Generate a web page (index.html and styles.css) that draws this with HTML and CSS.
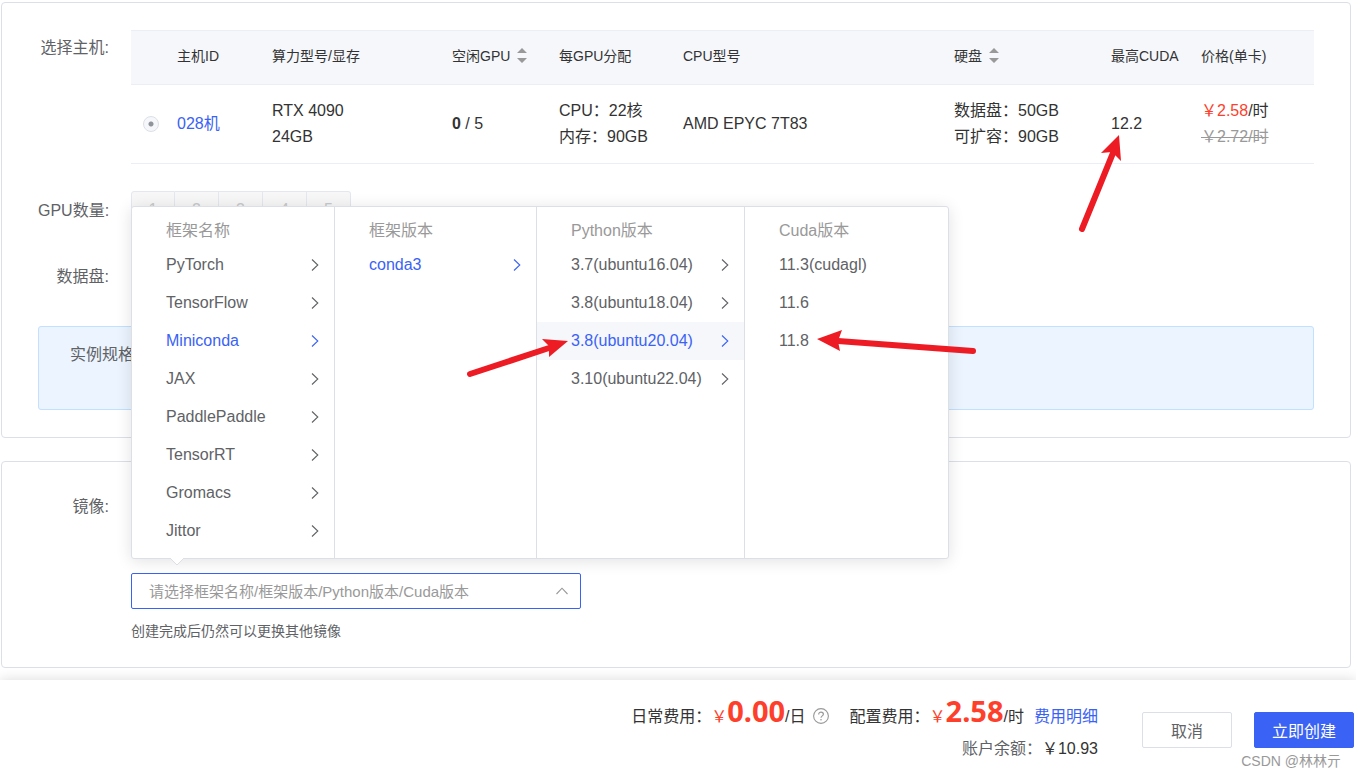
FILE: index.html
```html
<!DOCTYPE html>
<html lang="zh-CN">
<head>
<meta charset="utf-8">
<title>创建实例</title>
<link rel="stylesheet" href="styles.css">
</head>
<body>
<svg class="defs" width="0" height="0" aria-hidden="true">
  <symbol id="chevron" viewBox="0 0 8 14"><path d="M1 1.5 6.8 7 1 12.5" fill="none" stroke="currentColor" stroke-width="1.1"/></symbol>
  <symbol id="sort" viewBox="0 0 10 15"><path d="M5 0 10 5H0zM0 10H10L5 15z" fill="currentColor"/></symbol>
</svg>
<main class="main">
  <section class="card">
    <div class="form-row form-row--host">
      <span class="label label--top">选择主机:</span>
      <table class="hosts">
        <colgroup>
          <col class="c-radio"><col class="c-id"><col class="c-model"><col class="c-free"><col class="c-alloc"><col class="c-cpu"><col class="c-disk"><col class="c-cuda"><col class="c-price">
        </colgroup>
        <thead>
          <tr>
            <th></th>
            <th>主机ID</th>
            <th>算力型号/显存</th>
            <th><span class="sortable">空闲GPU<svg class="sort-icon"><use href="#sort"/></svg></span></th>
            <th>每GPU分配</th>
            <th>CPU型号</th>
            <th><span class="sortable">硬盘<svg class="sort-icon"><use href="#sort"/></svg></span></th>
            <th>最高CUDA</th>
            <th>价格(单卡)</th>
          </tr>
        </thead>
        <tbody>
          <tr>
            <td><input class="radio" type="radio" name="host" aria-label="028机" checked disabled></td>
            <td><a class="link" href="#">028机</a></td>
            <td>RTX 4090<br>24GB</td>
            <td><b>0</b> / 5</td>
            <td>CPU：22核<br>内存：90GB</td>
            <td>AMD EPYC 7T83</td>
            <td>数据盘：50GB<br>可扩容：90GB</td>
            <td>12.2</td>
            <td><span class="price">￥2.58</span>/时<br><del class="old-price">￥2.72/时</del></td>
          </tr>
        </tbody>
      </table>
    </div>
    <div class="form-row form-row--gpu">
      <span class="label">GPU数量:</span>
      <div class="gpu-group">
        <button type="button" disabled>1</button><button type="button" disabled>2</button><button type="button" disabled>3</button><button type="button" disabled>4</button><button type="button" disabled>5</button>
      </div>
    </div>
    <div class="form-row form-row--disk">
      <span class="label">数据盘:</span>
    </div>
    <div class="spec">实例规格:</div>
  </section>

  <section class="card card--image">
    <div class="form-row">
      <label class="label label--top" for="image">镜像:</label>
      <div class="image-field">
        <div class="cascader">
          <input class="cascader-input" id="image" type="text" placeholder="请选择框架名称/框架版本/Python版本/Cuda版本" readonly>
          <svg class="cascader-caret" viewBox="0 0 14 8"><path d="M1.5 7 7 1.2 12.5 7" fill="none" stroke="currentColor" stroke-width="1.1"/></svg>
          <div class="popper">
            <div class="menu">
              <h4>框架名称</h4>
              <ul>
                <li>PyTorch<svg><use href="#chevron"/></svg></li>
                <li>TensorFlow<svg><use href="#chevron"/></svg></li>
                <li class="active">Miniconda<svg><use href="#chevron"/></svg></li>
                <li>JAX<svg><use href="#chevron"/></svg></li>
                <li>PaddlePaddle<svg><use href="#chevron"/></svg></li>
                <li>TensorRT<svg><use href="#chevron"/></svg></li>
                <li>Gromacs<svg><use href="#chevron"/></svg></li>
                <li>Jittor<svg><use href="#chevron"/></svg></li>
              </ul>
            </div>
            <div class="menu">
              <h4>框架版本</h4>
              <ul>
                <li class="active">conda3<svg><use href="#chevron"/></svg></li>
              </ul>
            </div>
            <div class="menu menu--python">
              <h4>Python版本</h4>
              <ul>
                <li>3.7(ubuntu16.04)<svg><use href="#chevron"/></svg></li>
                <li>3.8(ubuntu18.04)<svg><use href="#chevron"/></svg></li>
                <li class="active hover">3.8(ubuntu20.04)<svg><use href="#chevron"/></svg></li>
                <li>3.10(ubuntu22.04)<svg><use href="#chevron"/></svg></li>
              </ul>
            </div>
            <div class="menu menu--cuda">
              <h4>Cuda版本</h4>
              <ul>
                <li>11.3(cudagl)</li>
                <li>11.6</li>
                <li>11.8</li>
              </ul>
            </div>
            <svg class="popper-arrow" viewBox="0 0 14 8"><path d="M0 0 7 7 14 0" fill="#fff" stroke="#dcdfe6"/><path d="M1 0H13" stroke="#fff" stroke-width="2"/></svg>
          </div>
        </div>
        <p class="hint">创建完成后仍然可以更换其他镜像</p>
      </div>
    </div>
  </section>
</main>

<footer class="footer">
  <div class="costs">
    <div class="cost-line">
      <span>日常费用：</span><span class="price">￥</span><b class="amount">0.00</b><span class="unit">/日</span>
      <svg class="help" viewBox="0 0 16 16" fill="none" stroke="currentColor"><circle cx="8" cy="8" r="7.4" stroke-width="1.1"/><path d="M5.700 6.400c0-3.200 4.700-3 4.700-.2C10.400 7.900 8 7.900 8 9.800" stroke-width="1.200"/><circle cx="8" cy="11.700" r=".8" fill="currentColor" stroke="none"/></svg>
      <span class="config">配置费用：</span><span class="price">￥</span><b class="amount">2.58</b><span class="unit">/时</span>
      <a class="link detail" href="#">费用明细</a>
    </div>
    <div class="balance"><span>账户余额：</span><strong>￥10.93</strong></div>
  </div>
  <button class="btn" type="button">取消</button>
  <button class="btn btn--primary" type="button">立即创建</button>
</footer>

<svg class="arrows" width="1356" height="777" viewBox="0 0 1356 777" fill="#ed1c24" stroke="#ed1c24" aria-hidden="true">
  <path d="M1082 229 1113 153M470 374 549 348M973 351 838 341" fill="none" stroke-width="6" stroke-linecap="round"/>
  <path d="M1119 135 1101 153 1112 152 1121 161zM568 341 542 339 549 346 549 357zM817 339 842 330 838 341 840 351z" stroke="none"/>
</svg>
<span class="watermark">CSDN @林林亓</span>
</body>
</html>
```

FILE: styles.css
```css
* { box-sizing: border-box; }

body {
  margin: 0;
  min-height: 100vh;
  position: relative;
  display: flex;
  flex-direction: column;
  background: #fff;
  color: #333;
  font-family: "Liberation Sans", "Noto Sans CJK SC", sans-serif;
  font-size: 16px;
  line-height: 26px;
}

input, button { font-family: inherit; }
.defs { position: absolute; }

.main {
  display: grid;
  gap: 23px;
  padding: 2px 5px 12px 1px;
}

.card {
  border: 1px solid #dcdfe6;
  border-radius: 4px;
  padding: 27px 36px;
}
.card--image { padding-bottom: 25px; }

.form-row {
  display: grid;
  grid-template-columns: 71px minmax(0, 1fr);
  column-gap: 22px;
}
.form-row--gpu { margin-top: 27px; }
.form-row--disk { margin: 26px 0 29px; }

.label {
  color: #606266;
  text-align: right;
  white-space: nowrap;
  line-height: 40px;
}
.label--top { line-height: 36px; }

.hosts {
  width: 100%;
  table-layout: fixed;
  border-collapse: separate;
  border-spacing: 0;
}
.hosts th, .hosts td {
  padding: 0 0 0 12px;
  text-align: left;
  border-bottom: 1px solid #ebeef5;
  white-space: nowrap;
}
.hosts th {
  height: 55px;
  padding-bottom: 4px;
  background: #f5f7fb;
  border-top: 1px solid #ebeef5;
  font-size: 14px;
  font-weight: 400;
  line-height: 22px;
}
.hosts td { height: 79px; }
.c-radio { width: 34px; }
.c-id { width: 95px; }
.c-model { width: 180px; }
.c-free { width: 107px; }
.c-alloc { width: 124px; }
.c-disk { width: 157px; }
.c-cuda { width: 90px; }
.c-price { width: 125px; }

.sortable { display: flex; align-items: center; gap: 7px; }
.sort-icon { width: 10px; height: 15px; color: #999; }

.radio {
  appearance: none;
  display: block;
  width: 16px;
  height: 16px;
  margin: 0;
  border: 1px solid #dcdfe6;
  border-radius: 50%;
  background: radial-gradient(circle, #909399 2px, #f5f7fa 3px);
}

.link { color: #3a62f5; text-decoration: none; }
.price { color: #fd3f2c; }
.old-price { color: #999; }

.gpu-group { display: flex; }
.gpu-group button {
  width: 44px;
  height: 38px;
  padding: 0;
  border: 1px solid #e4e7ed;
  border-left-width: 0;
  background: #f7f7f7;
  color: #c8c9cc;
  font-size: 16px;
}
.gpu-group button:first-child { border-left-width: 1px; border-radius: 3px 0 0 3px; }
.gpu-group button:last-child { border-radius: 0 3px 3px 0; }

.spec {
  min-height: 84px;
  padding: 15px 31px;
  border: 1px solid #c2e0ff;
  border-radius: 3px;
  background: #ecf5ff;
  color: #606266;
}

.image-field { padding-top: 84px; }

.cascader { position: relative; width: 450px; max-width: 100%; }
.cascader-input {
  display: block;
  width: 100%;
  height: 36px;
  padding: 0 40px 0 17px;
  border: 1px solid #3a62f5;
  border-radius: 2px;
  background: #fff;
  font-size: 15px;
}
.cascader-input::placeholder { color: #999; opacity: 1; }
.cascader-caret {
  position: absolute;
  right: 12px;
  top: 14px;
  width: 14px;
  height: 8px;
  color: #999;
}

.popper {
  position: absolute;
  left: 0;
  bottom: calc(100% + 14px);
  z-index: 2;
  display: flex;
  border: 1px solid #dcdfe6;
  border-radius: 3px;
  background: #fff;
  box-shadow: 0 2px 16px rgba(0, 0, 0, .12);
  color: #606266;
}
.menu { width: 202px; padding: 9px 0 8px; }
.menu--python { width: 208px; }
.menu--cuda { width: 204px; }
.menu + .menu { border-left: 1px solid #dcdfe6; }
.menu h4 {
  margin: 0;
  padding-left: 34px;
  color: #999;
  font-size: 16px;
  font-weight: 400;
  line-height: 30px;
}
.menu ul { margin: 0; padding: 0; list-style: none; }
.menu li {
  display: flex;
  align-items: center;
  justify-content: space-between;
  height: 38px;
  padding: 0 15px 0 34px;
}
.menu li svg { width: 8px; height: 14px; }
.menu .active { color: #3a62f5; }
.menu .hover { background: #f5f7fb; }
.popper-arrow {
  position: absolute;
  left: 38px;
  top: 100%;
  width: 14px;
  height: 8px;
}

.hint {
  margin: 11px 0 0;
  color: #606266;
  font-size: 14px;
  line-height: 22px;
}

.footer {
  flex: 1;
  display: flex;
  justify-content: flex-end;
  align-items: flex-start;
  padding: 11px 2px 6px 0;
  background: #fff;
  box-shadow: 0 0 12px rgba(0, 0, 30, .15);
}
.costs { margin-right: 44px; }
.cost-line { display: flex; align-items: baseline; line-height: 40px; height: 40px; }
.amount {
  color: #fd3f2c;
  font-family: "Noto Sans", sans-serif;
  font-size: 29px;
}
.help { width: 16px; height: 16px; margin: 10px 21px 0 7px; align-self: center; color: #999; }
.detail { margin-left: 10px; }
.balance { text-align: right; color: #606266; line-height: 36px; }
.balance strong { color: #333; font-weight: 400; }

.btn {
  min-width: 90px;
  height: 36px;
  margin-top: 21px;
  padding: 0 17px;
  border: 1px solid #dcdfe6;
  border-radius: 2px;
  background: #fff;
  color: #606266;
  font-size: 16px;
}
.btn--primary {
  margin-left: 22px;
  border-color: #3a62f5;
  background: #3a62f5;
  color: #fff;
}

.arrows { position: absolute; left: 0; top: 0; z-index: 3; pointer-events: none; }
.watermark {
  position: absolute;
  right: 15px;
  bottom: 5px;
  z-index: 3;
  color: #999;
  font-size: 14px;
  line-height: 22px;
}
```
